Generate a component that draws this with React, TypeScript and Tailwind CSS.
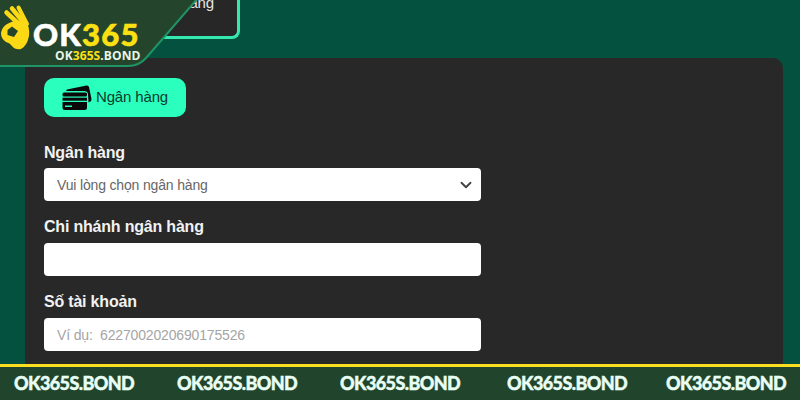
import React from 'react';
import { ChevronDown } from 'lucide-react';

const footerItems = ['ml-[14px]', 'ml-[43px]', 'ml-[43px]', 'ml-[47px]', 'ml-[39px]'];

// Yellow "OK" hand from the logo
const HandIcon = () => (
  <svg width="32" height="52" viewBox="0 0 32 52" className="absolute left-0 top-0">
    <g stroke="#fbd914" strokeLinecap="round" fill="none">
      <path d="M6.5 12.5 L20 25" strokeWidth="4.5" />
      <path d="M12 8.5 L24 23" strokeWidth="4.5" />
      <path d="M18.5 7.5 L27 24" strokeWidth="4" />
    </g>
    <path
      fillRule="evenodd"
      d="M17 21 L26 20 Q30 28 29 36 Q27 46 21 49 Q15 50 12 46 Q10 43 6 42 Q1 39 1 33 Q2 27 7 24 Q12 21 17 21 Z M12 26.5 L18 31 L14 37 L7.5 35 L7.5 30 Z"
      fill="#fbd914"
    />
  </svg>
);

const CardsIcon = () => (
  <svg width="30" height="26" viewBox="0 0 30 26" className="shrink-0">
    <path d="M5 4.5 L24.5 0.5 Q26.5 0.3 27 2 L29.5 14 Q29.8 16.5 27.5 17 L26.5 17.3 L26 9 Q25.5 6 22 6 L4 6 Z" fill="#0a0a0a" />
    <rect x="0.5" y="7.5" width="24.5" height="4" rx="1.6" fill="#0a0a0a" />
    <rect x="0.5" y="12.7" width="24.5" height="3" fill="#0a0a0a" />
    <path d="M0.5 17 H25 V22.5 Q25 25 22.5 25 H3 Q0.5 25 0.5 22.5 Z" fill="#0a0a0a" />
    <rect x="3" y="20.5" width="7" height="1.5" fill="#2affbe" />
  </svg>
);

const Logo = () => (
  <div className="absolute left-0 top-0 w-[200px] h-[68px]">
    <svg width="200" height="68" viewBox="0 0 200 68" className="absolute left-0 top-0">
      <path d="M-2 -2 H198 L146 58 Q139 66 128 66 H-2 Z" fill="#24452b" stroke="#1f9466" strokeWidth="2" />
    </svg>
    <HandIcon />
    <div className="absolute left-[33px] top-[16px] text-[31px] leading-[36px] font-black tracking-[1.2px] [-webkit-text-stroke:0.6px_currentColor] font-['Lato',sans-serif] text-white">
      OK<span className="text-[#fbe014]">365</span>
    </div>
    <div className="absolute left-[55px] top-[48px] text-[12px] leading-[15px] font-bold tracking-[0.1px] font-['Open_Sans',sans-serif] text-[#e8f5e8]">
      OK<span className="text-[#fbe014]">365S</span>.BOND
    </div>
  </div>
);

const inputClass =
  "block w-[437px] h-[33px] rounded-[4px] bg-white px-[13px] text-[14px] tracking-[-0.16px] text-[#666] outline-none placeholder:text-[#a5a5a5] font-['Liberation_Sans',sans-serif]";

const labelClass = "block text-[16px] leading-[20px] tracking-[-0.2px] font-bold text-[#f2f2f2]";

export default function App() {
  return (
    <div className="relative w-[800px] h-[400px] overflow-hidden flex flex-col bg-[#04513f] font-['Liberation_Sans',sans-serif]">
      {/* top tab, mostly hidden under the logo */}
      <div className="h-[39px] ml-[100px] w-[140px] shrink-0 flex justify-end items-end overflow-hidden rounded-br-[8px] border-r-[3px] border-b-[3px] border-[#35e8ad] bg-[#272727] pr-[23px] pb-[24px]">
        <span className="text-[15px] leading-[18px] tracking-[-0.15px] text-[#e5e5e5] whitespace-nowrap">Ngân hàng</span>
      </div>

      <div className="flex-1 mt-[19px] ml-[25px] mr-[17px] rounded-t-[10px] bg-[#282828] px-[19px] pt-[20px] overflow-hidden">
        <button className="flex items-center gap-[4px] w-[142px] h-[39px] rounded-[10px] bg-[#2affbe] pl-[18px] text-[15px] tracking-[-0.15px] text-[#0d3b2c]">
          <CardsIcon />
          Ngân hàng
        </button>

        <div className="mt-[26px]">
          <label className={labelClass + ' mb-[5px]'}>Ngân hàng</label>
          <div className="relative w-[437px]">
            <select className={inputClass + ' appearance-none pt-[2px]'} defaultValue="">
              <option value="">Vui lòng chọn ngân hàng</option>
            </select>
            <ChevronDown size={18} strokeWidth={2.5} className="absolute right-[6px] top-[8px] text-[#444]" />
          </div>
        </div>

        <div className="mt-[16px]">
          <label className={labelClass + ' mb-[6px]'}>Chi nhánh ngân hàng</label>
          <input className={inputClass} />
        </div>

        <div className="mt-[16px]">
          <label className={labelClass + ' mb-[6px]'}>Số tài khoản</label>
          <input className={inputClass} placeholder="Ví dụ:  6227002020690175526" />
        </div>
      </div>

      <div className="h-[36px] shrink-0 flex items-center border-t-[3px] border-[#fbdd22] bg-[#21452c] text-[18px] tracking-[-0.6px] [-webkit-text-stroke:0.4px_currentColor] font-black font-['Lato',sans-serif] text-[#e9fff4]">
        {footerItems.map((ml, i) => (
          <span key={i} className={ml + ' w-[120px] whitespace-nowrap'}>OK365S.BOND</span>
        ))}
      </div>

      <Logo />
    </div>
  );
}
